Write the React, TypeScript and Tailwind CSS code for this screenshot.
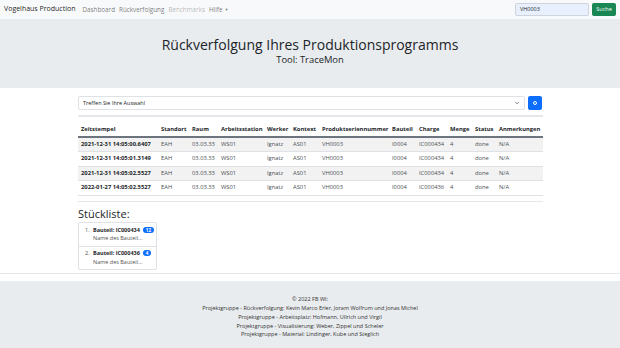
import { ChevronDown } from 'lucide-react';

const columns = [
  { label: 'Zeitstempel', w: 'w-[80px]' },
  { label: 'Standort', w: 'w-[31px]' },
  { label: 'Raum', w: 'w-[29px]' },
  { label: 'Arbeitsstation', w: 'w-[46px]' },
  { label: 'Werker', w: 'w-[26px]' },
  { label: 'Kontext', w: 'w-[29px]' },
  { label: 'Produktseriennummer', w: 'w-[70px]' },
  { label: 'Bauteil', w: 'w-[27px]' },
  { label: 'Charge', w: 'w-[31px]' },
  { label: 'Menge', w: 'w-[25px]' },
  { label: 'Status', w: 'w-[24px]' },
  { label: 'Anmerkungen', w: 'w-[47px]' },
];

const rows = [
  ['2021-12-31 14:05:00.6407', 'IC000434'],
  ['2021-12-31 14:05:01.3149', 'IC000434'],
  ['2021-12-31 14:05:02.5527', 'IC000434'],
  ['2022-01-27 14:05:02.5527', 'IC000436'],
];

const parts = [
  { n: 1, charge: 'IC000434', count: 12 },
  { n: 2, charge: 'IC000436', count: 4 },
];

const credits = [
  'Projektgruppe - Rückverfolgung: Kevin Marco Erler, Joram Wolfrum und Jonas Michel',
  'Projektgruppe - Arbeitsplatz: Hofmann, Ullrich und Virgil',
  'Projektgruppe - Visualisierung: Weber, Zippel und Scheler',
  'Projektgruppe - Material: Lindinger, Kube und Steglich',
];

export default function App() {
  return (
    <div className="flex h-[348px] w-[620px] flex-col bg-white font-['Open_Sans',sans-serif] text-[#212529]">
      {/* navbar */}
      <nav className="flex h-[19px] items-center bg-[#f8f9fa] pl-[4px] pr-[4px]">
        <span className="mr-[7px] text-[7px] text-black/90">Vogelhaus Production</span>
        <div className="flex items-center gap-[4px] text-[6.3px]">
          <span className="text-black/55">Dashboard</span>
          <span className="text-black/55">Rückverfolgung</span>
          <span className="text-black/30">Benchmarks</span>
          <span className="flex items-center gap-[2px] text-black/55">
            Hilfe <span className="text-[4px]">▼</span>
          </span>
        </div>
        <div className="ml-auto flex items-center gap-[3px]">
          <div className="flex h-[13px] w-[74px] items-center rounded-[2px] border border-[#ced4da] bg-[#e8f0fe] px-[4px] text-[5.5px]">
            VH0003
          </div>
          <button className="h-[13px] w-[24px] rounded-[2px] bg-[#198754] text-[5.5px] text-white">Suche</button>
        </div>
      </nav>

      {/* jumbotron */}
      <header className="flex h-[69px] flex-col items-center justify-center bg-[#e9ecef] pb-[6px]">
        <h1 className="text-[14px] leading-[18px]">Rückverfolgung Ihres Produktionsprogramms</h1>
        <p className="text-[9.4px] leading-[12px]">Tool: TraceMon</p>
      </header>

      <main className="mx-[78px] mt-[8px] flex flex-col">
        <div className="flex items-center gap-[3px]">
          <div className="flex h-[14px] flex-1 items-center justify-between rounded-[2px] border border-[#dee2e6] px-[4px] text-[5.5px]">
            <span>Treffen Sie Ihre Auswahl</span>
            <ChevronDown size={6} strokeWidth={2.5} className="text-[#343a40]" />
          </div>
          <button className="flex h-[14px] w-[14px] items-center justify-center rounded-[2px] bg-[#0d6efd]">
            <span className="block h-[4px] w-[4px] rounded-full border border-white" />
          </button>
        </div>

        <div className="mt-[5px] h-[2px] w-[465px] bg-[#e5e7ea]" />

        <table className="mt-[6px] w-[465px] table-fixed border-collapse text-left text-[5.8px]">
          <thead>
            <tr className="h-[14px] border-b-[2px] border-[#6c757d]">
              {columns.map((c) => (
                <th key={c.label} className={`${c.w} px-[3px] font-bold whitespace-nowrap`}>
                  {c.label}
                </th>
              ))}
            </tr>
          </thead>
          <tbody className="text-[#4a4f55]">
            {rows.map(([time, charge], i) => (
              <tr key={time} className={`h-[14.5px] border-b border-[#dee2e6] ${i % 2 === 0 ? 'bg-[#f2f2f2]' : 'bg-white'}`}>
                <td className="px-[3px] font-bold whitespace-nowrap text-[#212529]">{time}</td>
                <td className="px-[3px]">EAH</td>
                <td className="px-[3px]">03.03.33</td>
                <td className="px-[3px]">WS01</td>
                <td className="px-[3px]">Ignatz</td>
                <td className="px-[3px]">AS01</td>
                <td className="px-[3px]">VH0003</td>
                <td className="px-[3px]">I0004</td>
                <td className="px-[3px]">{charge}</td>
                <td className="px-[3px]">4</td>
                <td className="px-[3px]">done</td>
                <td className="px-[3px]">N/A</td>
              </tr>
            ))}
          </tbody>
        </table>

        <div className="mt-[5px] h-[1px] w-[465px] bg-[#e5e7ea]" />

        <h2 className="mt-[5px] text-[11px] leading-[14px]">Stückliste:</h2>
        <ol className="mt-[1px] w-[79px] rounded-[2px] border border-[#dee2e6] text-[5.5px]">
          {parts.map((p, i) => (
            <li key={p.n} className={`flex h-[23px] flex-col justify-center pl-[6px] ${i > 0 ? 'border-t border-[#dee2e6]' : ''}`}>
              <div className="flex items-center">
                <span className="w-[8px] text-[#555]">{p.n}.</span>
                <span className="font-bold">Bauteil: {p.charge}</span>
                <span className="ml-[3px] rounded-full bg-[#0d6efd] px-[3px] text-[4.5px] leading-[6px] font-bold text-white">{p.count}</span>
              </div>
              <span className="pl-[8px] text-[#555]">Name des Bauteil...</span>
            </li>
          ))}
        </ol>
      </main>

      <div className="mt-[3px] h-[1px] w-full bg-[#e5e7ea]" />

      <footer className="mt-[7px] flex flex-1 flex-col items-center justify-center bg-[#e9ecef] pt-[6px] text-[5.5px] leading-[8.7px] text-[#333]">
        <span>© 2022 FB WI:</span>
        {credits.map((c) => (
          <span key={c}>{c}</span>
        ))}
      </footer>
    </div>
  );
}
